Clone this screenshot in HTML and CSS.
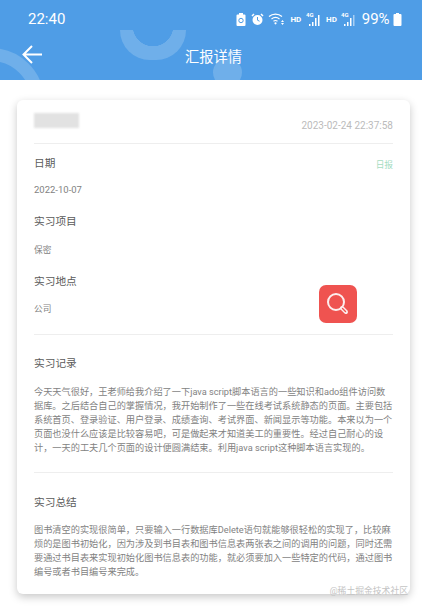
FILE: index.html
```html
<!DOCTYPE html>
<html lang="zh">
<head>
    <title>汇报详情</title>
    <meta charset="utf-8">
    <meta name="viewport" content="width=device-width, initial-scale=1.0">
    <link rel="stylesheet" href="styles.css">
</head>
<body>
    <header class="header">
        <span class="deco deco-ring"></span>
        <span class="deco deco-arc"></span>
        <span class="deco deco-dot"></span>

        <div class="status-bar">
            <span class="clock">22:40</span>
            <div class="status-icons">
                <svg class="ico" width="10" height="13" viewBox="0 0 10 13"><path d="M3 0h4v1.500h1.500a1 1 0 0 1 1 1V12a1 1 0 0 1-1 1h-7a1 1 0 0 1-1-1V2.500a1 1 0 0 1 1-1H3z" fill="#fff"/><circle cx="5" cy="7.500" r="2.200" fill="none" stroke="#4f9de6"/></svg>
                <svg class="ico" width="13" height="13" viewBox="0 0 13 13"><circle cx="6.500" cy="7" r="5" fill="#fff"/><path d="M1 3l2-2M12 3l-2-2" stroke="#fff" stroke-width="1.500"/><path d="M6.500 4v3.200l2 1" fill="none" stroke="#4f9de6"/></svg>
                <svg class="ico" width="18" height="14" viewBox="0 0 18 14"><g fill="none" stroke="#fff" stroke-width="1.200"><path d="M1 4.500a10 10 0 0 1 13 0"/><path d="M3.500 7a6.500 6.500 0 0 1 8 0"/><path d="M5.500 9.300a3.200 3.200 0 0 1 4 0"/></g><circle cx="7.500" cy="11.300" r="1.100" fill="#fff"/><path d="M14.500 8l1.500 2h-3zM14.500 13l1.500-2h-3z" fill="#fff"/></svg>
                <span class="hd">HD</span>
                <svg class="ico" width="16" height="14" viewBox="0 0 16 14"><text x="0" y="5" class="net">4G</text><path d="M3 12h1.500v2H3zM6 10h1.500v4H6zM9 6h1.500v8H9zM12 3h1.500v11H12z" fill="#fff"/></svg>
                <span class="hd">HD</span>
                <svg class="ico" width="16" height="14" viewBox="0 0 16 14"><text x="0" y="5" class="net">4G</text><path d="M3 12h1.500v2H3zM6 10h1.500v4H6zM9 6h1.500v8H9z" fill="#fff"/><path d="M12 3h1.500v11H12z" fill="#fff" opacity=".5"/></svg>
                <span class="battery-text">99%</span>
                <svg class="ico" width="9" height="13" viewBox="0 0 9 13"><path d="M3 0h3v1h1.500a1 1 0 0 1 1 1v10a1 1 0 0 1-1 1h-6a1 1 0 0 1-1-1V2a1 1 0 0 1 1-1H3z" fill="#fff"/></svg>
            </div>
        </div>

        <div class="nav-bar">
            <svg class="back" width="20" height="20" viewBox="0 0 20 20"><path d="M10 1L1.500 9.500 10 18M1.500 9.500H20" fill="none" stroke="#fff" stroke-width="2"/></svg>
            <h1 class="nav-title">汇报详情</h1>
        </div>
    </header>

    <main class="card">
        <div class="card-top">
            <div class="avatar-blur"></div>
            <span class="time">2023-02-24 22:37:58</span>
        </div>

        <section class="info">
            <div class="row">
                <h2>日期</h2>
                <span class="tag">日报</span>
            </div>
            <p class="date">2022-10-07</p>
            <h2>实习项目</h2>
            <p class="val">保密</p>
            <h2>实习地点</h2>
            <p class="val">公司</p>
        </section>

        <section class="block">
            <h2>实习记录</h2>
            <p class="text">今天天气很好，王老师给我介绍了一下java script脚本语言的一些知识和ado组件访问数<br>据库。之后结合自己的掌握情况，我开始制作了一些在线考试系统静态的页面。主要包括<br>系统首页、登录验证、用户登录、成绩查询、考试界面、新闻显示等功能。本来以为一个<br>页面也没什么应该是比较容易吧，可是做起来才知道美工的重要性。经过自己耐心的设<br>计，一天的工夫几个页面的设计便圆满结束。利用java script这种脚本语言实现的。</p>
        </section>

        <section class="block last">
            <h2>实习总结</h2>
            <p class="text">图书清空的实现很简单，只要输入一行数据库Delete语句就能够很轻松的实现了，比较麻<br>烦的是图书初始化，因为涉及到书目表和图书信息表两张表之间的调用的问题，同时还需<br>要通过书目表来实现初始化图书信息表的功能，就必须要加入一些特定的代码，通过图书<br>编号或者书目编号来完成。</p>
        </section>
    </main>

    <button class="search-btn">
        <svg width="26" height="26" viewBox="0 0 26 26"><circle cx="11" cy="11" r="8" fill="none" stroke="#fdeeee" stroke-width="2"/><path d="M17 17l4 4" stroke="#fdeeee" stroke-width="4" stroke-linecap="round"/><path d="M17.500 17.500l3 3" stroke="#ef5350" stroke-width="1.400" stroke-linecap="round"/></svg>
    </button>

    <div class="watermark">@稀土掘金技术社区</div>
</body>
</html>
```

FILE: styles.css
```css
:root {
    --blue: #4f9de6;
    --title: #5a5a5a;
    --grey: #828282;
    --line: #eeeeee;
}

* {
    box-sizing: border-box;
}

body {
    position: relative;
    width: 422px;
    height: 609px;
    margin: 0;
    overflow: hidden;
    background-color: #fff;
    font-family: Roboto, "Noto Sans CJK SC", sans-serif;
    color: var(--title);
}

.header {
    position: relative;
    height: 80px;
    overflow: hidden;
    background-color: var(--blue);
    color: #fff;
}

.deco {
    position: absolute;
    border-radius: 50%;
}

.deco-ring {
    left: 120px;
    top: 30px;
    width: 66px;
    height: 30px;
    border-radius: 0 0 33px 33px;
    background: radial-gradient(circle at 33px -4px, transparent 20px, #6fafea 20.500px);
}

.deco-arc {
    left: -62px;
    top: 48px;
    width: 106px;
    height: 106px;
    border: 13px solid #6fafea;
}

.deco-dot {
    left: 213px;
    top: 58px;
    width: 29px;
    height: 29px;
    background-color: #6fafea;
}

.status-bar {
    position: relative;
    display: flex;
    justify-content: space-between;
    align-items: center;
    height: 38px;
    padding: 0 20px 0 28px;
}

.clock {
    font-size: 15px;
}

.status-icons {
    display: flex;
    align-items: center;
    gap: 4.400px;
}

.ico {
    display: block;
}

.hd {
    font-size: 8px;
    font-weight: 700;
}

.net {
    font-size: 6px;
    font-weight: 700;
    fill: #fff;
}

.battery-text {
    font-size: 15px;
    margin-right: -1px;
}

.nav-bar {
    position: relative;
    display: flex;
    align-items: center;
    justify-content: center;
    height: 36px;
    margin-top: -1px;
    padding-left: 5px;
}

.back {
    position: absolute;
    left: 22px;
    top: 8px;
}

.nav-title {
    margin: 0;
    font-size: 14.250px;
    font-weight: 400;
}

.card {
    width: 393px;
    height: 494px;
    margin: 20px 0 0 17px;
    padding: 0 17px;
    border-radius: 6px;
    background-color: #fff;
    box-shadow: 0 3px 8px rgba(0,0,0,0.22);
}

.card-top {
    display: flex;
    justify-content: space-between;
    align-items: flex-end;
    height: 44px;
    padding-bottom: 10px;
    border-bottom: 1px solid var(--line);
}

.avatar-blur {
    width: 45px;
    height: 15px;
    margin-bottom: 5px;
    background-color: #e2e2e2;
    filter: blur(1px);
}

.time {
    font-size: 10px;
    line-height: 14px;
    color: #bbb;
}

h2 {
    margin: 0;
    font-size: 10.700px;
    font-weight: 400;
    line-height: 16px;
}

.row {
    display: flex;
    justify-content: space-between;
    align-items: center;
}

.tag {
    font-size: 8.700px;
    color: #a5dcbf;
}

.info {
    padding: 12px 0 18px;
    border-bottom: 1px solid var(--line);
}

.date, .val {
    margin: 13px 0 17px;
    line-height: 14px;
    color: var(--grey);
}

.date {
    margin-top: 11px;
    font-size: 9.500px;
}

.val {
    font-size: 8.700px;
}

.val:last-child {
    margin: 12px 0 0;
}

.block {
    padding: 21px 0 17px;
    border-bottom: 1px solid var(--line);
}

.block.last {
    padding-top: 22px;
    border-bottom: none;
}

.text {
    margin: 13px 0 0;
    font-size: 9.200px;
    line-height: 14px;
    white-space: nowrap;
    color: var(--grey);
}

.block.last .text {
    margin-top: 12px;
}

.search-btn {
    position: absolute;
    left: 319px;
    top: 285px;
    display: flex;
    align-items: center;
    justify-content: center;
    width: 38px;
    height: 38px;
    padding: 0;
    border: none;
    border-radius: 7px;
    background-color: #ef5350;
}

.watermark {
    position: absolute;
    right: 14px;
    top: 584px;
    font-size: 8.800px;
    line-height: 14px;
    color: #c4c4c4;
}
```
